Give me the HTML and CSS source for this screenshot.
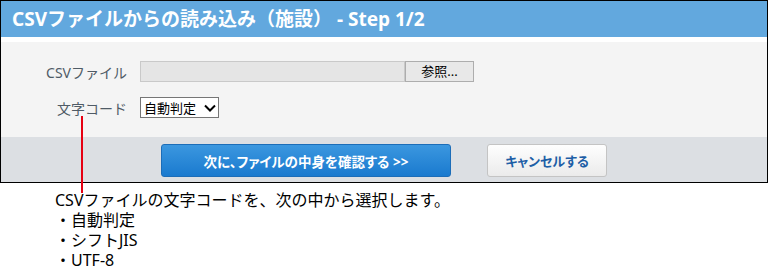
FILE: index.html
```html
<!DOCTYPE html>
<html lang="ja">
<head>
<meta charset="utf-8">
<title>CSV</title>
<link rel="stylesheet" href="styles.css">
</head>
<body>
<div class="page">
  <div class="frame">
    <div class="header"><h1 class="title">CSVファイルからの読み込み（施設） - Step 1/2</h1></div>
    <div class="gap"></div>
    <div class="body">
      <div class="row">
        <div class="label">CSVファイル</div>
        <div class="file">
          <div class="file-field"></div>
          <div class="file-btn">参照...</div>
        </div>
      </div>
      <div class="row">
        <div class="label">文字コード</div>
        <div class="select">
          <span>自動判定</span>
          <svg class="chev" width="12" height="8" viewBox="0 0 12 8"><path d="M1 1.5 L6 6.5 L11 1.5" fill="none" stroke="#000" stroke-width="2"/></svg>
        </div>
      </div>
    </div>
    <div class="footer">
      <div class="btn btn-primary">次に、ファイルの中身を確認する &gt;&gt;</div>
      <div class="btn btn-cancel">キャンセルする</div>
    </div>
  </div>
  <div class="note">
    <div>CSVファイルの文字コードを、次の中から選択します。</div>
    <div>・自動判定</div>
    <div>・シフトJIS</div>
    <div>・UTF-8</div>
  </div>
  <div class="pointer"></div>
</div>
</body>
</html>
```
FILE: styles.css
```css
* { box-sizing: border-box; }
html, body { margin: 0; padding: 0; background: #fff; }
body { font-family: "Noto Sans", "Noto Sans CJK JP", sans-serif; }
.page { position: relative; width: 768px; height: 270px; }
.frame { width: 768px; border: 1px solid #000; }
.header { height: 36px; background: #62a8de; padding-left: 11px; display: flex; align-items: center; }
.title { margin: 0; color: #fff; font-size: 19px; font-weight: bold; line-height: 36px; white-space: nowrap; }
.gap { height: 5px; background: #fff; }
.body { height: 95px; background: #f4f4f4; padding-top: 19px; display: flex; flex-direction: column; gap: 15px; }
.row { display: flex; align-items: center; height: 21px; }
.label { width: 128px; text-align: right; padding-right: 2px; color: #4f5b66; font-size: 14px; margin-right: 11px; }
.file { display: flex; height: 21px; }
.file-field { width: 265px; height: 21px; background: #e5e5e5; border: 1px solid #c9c9c9; }
.file-btn { width: 69px; height: 21px; background: #e8e8e8; border: 1px solid #adadad; font-size: 13px; color: #000; display: flex; align-items: center; justify-content: center; line-height: 1; }
.select { width: 79px; height: 21px; background: #fff; border: 1px solid #767676; display: flex; align-items: center; padding-left: 3px; font-size: 13px; color: #000; gap: 8px; }
.chev { display: block; }
.footer { height: 45px; background: #dcdfe3; padding: 7px 0 0 160px; display: flex; gap: 36px; align-items: flex-start; }
.btn { height: 33px; border-radius: 3px; display: flex; align-items: center; justify-content: center; font-size: 13px; font-weight: bold; font-feature-settings: "palt"; }
.btn-primary { width: 290px; color: #fff; background: linear-gradient(#3b97df, #1a7acf); border: 1px solid #1c6db8; font-size: 13.5px; }
.btn-cancel { width: 120px; color: #1d5ea6; background: linear-gradient(#fefefe, #ebebeb); border: 1px solid #c4c4c4; }
.note { margin-top: 7px; padding-left: 55px; font-size: 16px; line-height: 20px; color: #000; }
.note div { white-space: nowrap; }
.pointer { position: absolute; left: 81px; top: 116px; width: 2px; height: 77px; background: #e60012; }
```
